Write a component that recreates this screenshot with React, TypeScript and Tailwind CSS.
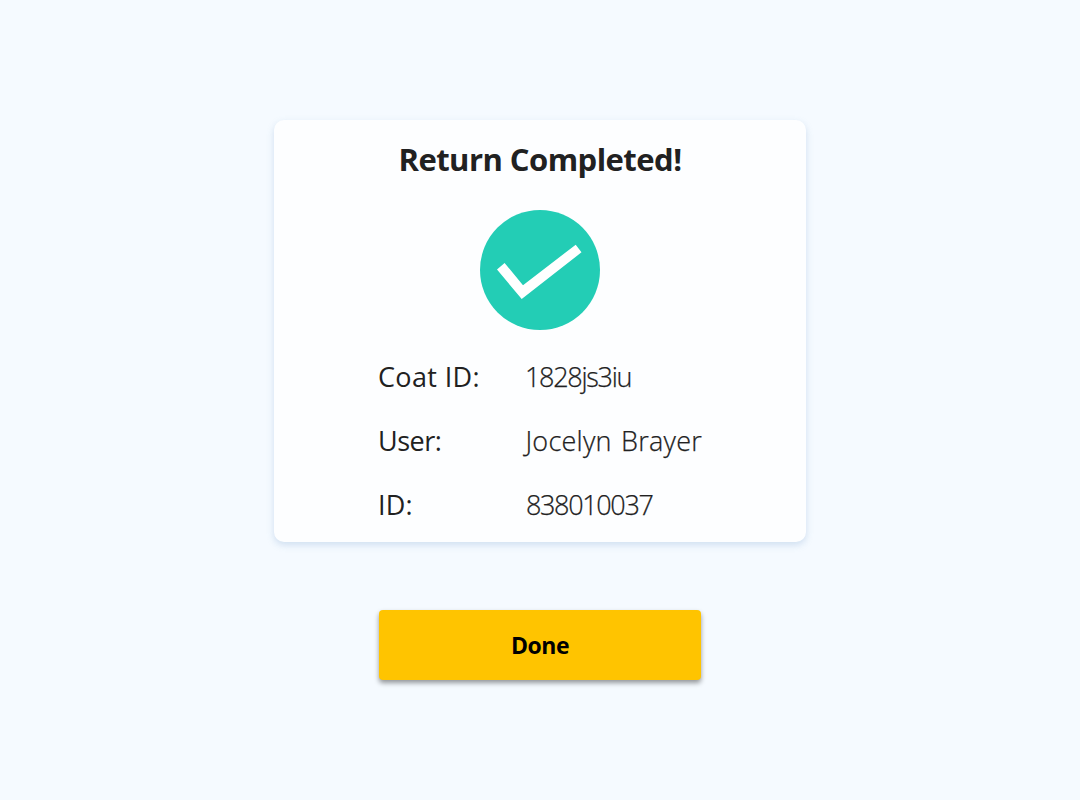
const details = [
  { label: "Coat ID:", value: "1828js3iu", labelClass: "tracking-[0.35px]", valueClass: "tracking-[-1.3px]" },
  { label: "User:", value: "Jocelyn Brayer", labelClass: "tracking-[-0.5px]", valueClass: "ml-0.5 tracking-[0.25px] [word-spacing:2px]" },
  { label: "ID:", value: "838010037", labelClass: "tracking-[0.2px]", valueClass: "ml-px tracking-[-1.35px]" },
];

function CheckBadge() {
  return (
    <svg className="mt-[31px] size-[120px] shrink-0" viewBox="0 0 120 120" aria-hidden="true">
      <circle cx="60" cy="60" r="60" fill="#23cdb5" />
      <path d="M17 59.6 24.6 53 43 75.2 95.7 34.7 101.5 42.3 41.7 89Z" fill="#fff" />
    </svg>
  );
}

export default function App() {
  return (
    <main className="flex h-[800px] w-[1080px] flex-col items-center overflow-hidden bg-[#f5faff] pt-[120px] font-['Open_Sans','Noto_Sans',sans-serif] text-[#212121]">
      <section className="flex h-[422px] w-[532px] flex-col items-center rounded-[10px] bg-[#fdfeff] pt-[19px] shadow-[0_3px_7px_rgba(110,155,200,0.28)]">
        <h1 className="h-10 text-[31px] leading-10 font-bold tracking-[-0.54px] whitespace-nowrap">Return Completed!</h1>
        <CheckBadge />
        <dl className="mt-[31px] flex w-[324px] flex-col gap-8 text-[27px] leading-8 whitespace-nowrap">
          {details.map((d) => (
            <div key={d.label} className="flex h-8">
              <dt className="w-[147px]">
                <span className={d.labelClass}>{d.label}</span>
              </dt>
              <dd className="font-light [-webkit-text-stroke:0.25px_#212121]">
                <span className={d.valueClass}>{d.value}</span>
              </dd>
            </div>
          ))}
        </dl>
      </section>
      <button className="mt-[68px] flex h-[70px] w-[322px] items-center justify-center rounded-[4px] bg-[#ffc400] pb-px text-[23px] leading-8 font-bold tracking-[-0.5px] text-black shadow-[0_3px_5px_rgba(0,0,0,0.4)]">
        Done
      </button>
    </main>
  );
}
